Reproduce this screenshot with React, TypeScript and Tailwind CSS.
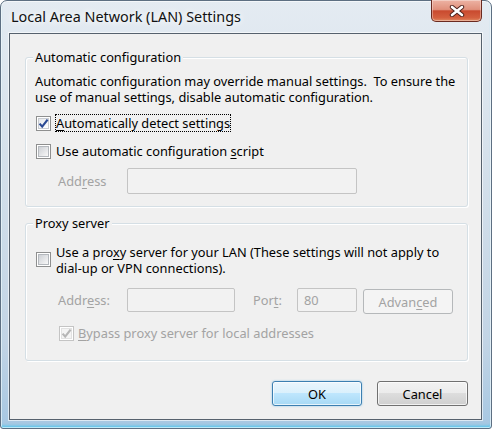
import React from "react";

function CheckBox({ checked, disabled }: { checked?: boolean; disabled?: boolean }) {
  return (
    <div
      className={`relative w-[15px] h-[15px] shrink-0 border ${
        disabled ? "border-[#c4c4c4]" : "border-[#8e8f8f]"
      } bg-white p-[1px]`}
    >
      <div
        className={`w-full h-full border ${
          disabled
            ? "border-[#e2e2e2] bg-[#f4f4f4]"
            : checked
            ? "border-[#c9ccd1] bg-gradient-to-br from-[#e4e7eb] to-[#ffffff]"
            : "border-[#b4b8bd] bg-gradient-to-br from-[#cdd0d5] to-[#f8f8f8]"
        }`}
      />
      {checked && (
        <svg
          className="absolute left-[0px] top-[0px]"
          width="13"
          height="13"
          viewBox="0 0 13 13"
        >
          <path
            d="M2.6 6.6 L5.2 9.6 L10.6 2.6"
            fill="none"
            stroke={disabled ? "#b6b6b6" : "#2b4a94"}
            strokeWidth="2.2"
          />
        </svg>
      )}
    </div>
  );
}

function GroupBox({
  title,
  className,
  children,
}: {
  title: string;
  className?: string;
  children: React.ReactNode;
}) {
  return (
    <div
      className={`ml-[15px] w-[443px] flex flex-col border border-[#d5dfe5] rounded-[3px] shadow-[inset_1px_1px_0_#ffffff,1px_1px_0_#ffffff] ${className ?? ""}`}
    >
      <span className="self-start -mt-[9px] ml-[7px] px-[2px] bg-[#f0f0f0] leading-[16px]">
        {title}
      </span>
      {children}
    </div>
  );
}

export default function App() {
  return (
    <div className="w-[492px] h-[429px] bg-white font-['Noto_Sans',sans-serif] text-[12.8px] text-black">
      <div className="w-[492px] h-[429px] rounded-t-[7px] rounded-b-[3px] border border-[#5d6f82] bg-[linear-gradient(180deg,#e4ebf2_0%,#d6e1eb_35%,#c2d4e5_80%,#a6c7e2_100%)] shadow-[inset_0_0_0_1px_rgba(255,255,255,0.6),inset_0_-3px_3px_-1px_rgba(70,200,240,0.9)] pl-[8px] pr-[9px] flex flex-col">
        {/* Title bar */}
        <div className="h-[32px] flex items-start justify-between">
          <div className="ml-[2px] mt-[6px] text-[14.4px] leading-[20px] text-[#111] [text-shadow:0_0_6px_#ffffff,0_0_10px_#ffffff]">
            Local Area Network (LAN) Settings
          </div>
          <div className="-mt-[1px] w-[51px] h-[22px] rounded-b-[5px] border border-t-0 border-[#6a2a20] bg-[linear-gradient(180deg,#edb3a4_0%,#e0907c_45%,#c94a2f_52%,#d4603f_85%,#e08a62_100%)] shadow-[inset_0_0_0_1px_rgba(255,255,255,0.35)] flex items-center justify-center">
            <svg width="16" height="12" viewBox="0 0 16 12">
              <path d="M3 2 L13 10 M13 2 L3 10" stroke="#4a1e18" strokeWidth="4.4" strokeLinecap="round" />
              <path d="M3 2 L13 10 M13 2 L3 10" stroke="#ffffff" strokeWidth="2.6" strokeLinecap="round" />
            </svg>
          </div>
        </div>

        {/* Client area */}
        <div className="w-[473px] h-[387px] border border-[#56616d] bg-[#f0f0f0] shadow-[0_0_0_1px_rgba(255,255,255,0.6)] flex flex-col">
          <GroupBox title="Automatic configuration" className="mt-[23px] pb-[12px]">
            <p className="mt-[8px] ml-[9px] leading-[16px]">
              Automatic configuration may override manual settings.&nbsp; To ensure the
              <br />
              use of manual settings, disable automatic configuration.
            </p>
            <div className="mt-[9px] ml-[10px] flex items-center gap-[4px]">
              <CheckBox checked />
              <span className="border border-dotted border-black leading-[16px]">
                <span className="underline underline-offset-2">A</span>utomatically detect settings
              </span>
            </div>
            <div className="mt-[10px] ml-[10px] flex items-center gap-[4px]">
              <CheckBox />
              <span className="border border-transparent leading-[16px]">
                Use automatic configuration <span className="underline underline-offset-2">s</span>cript
              </span>
            </div>
            <div className="mt-[8px] ml-[32px] flex items-center text-[#a3a3a3]">
              <span className="w-[69px] leading-[16px]">
                Add<span className="underline underline-offset-2">r</span>ess
              </span>
              <div className="w-[230px] h-[26px] border border-[#c4c4c4] rounded-[2px] bg-[#f2f2f2]" />
            </div>
          </GroupBox>

          <GroupBox title="Proxy server" className="mt-[16px] pb-[19px]">
            <div className="mt-[13px] ml-[10px] flex items-start gap-[5px]">
              <div className="mt-[8px]">
                <CheckBox />
              </div>
              <span className="leading-[16px]">
                Use a pro<span className="underline underline-offset-2">x</span>y server for your LAN (These settings will not apply to
                <br />
                dial-up or VPN connections).
              </span>
            </div>
            <div className="mt-[12px] ml-[32px] flex items-start text-[#a3a3a3]">
              <span className="w-[69px] leading-[24px]">
                Addr<span className="underline underline-offset-2">e</span>ss:
              </span>
              <div className="w-[108px] h-[24px] border border-[#c4c4c4] rounded-[2px] bg-[#f2f2f2]" />
              <span className="ml-[18px] w-[44px] leading-[24px]">
                Por<span className="underline underline-offset-2">t</span>:
              </span>
              <div className="w-[60px] h-[24px] border border-[#c4c4c4] rounded-[2px] bg-[#f2f2f2] pl-[6px] leading-[22px]">
                80
              </div>
              <div className="ml-[6px] mt-[1px] w-[90px] h-[25px] border border-[#b5b8ba] rounded-[3px] bg-[#f4f4f4] flex items-center justify-center leading-[16px]">
                Advan<span className="underline underline-offset-2">c</span>ed
              </div>
            </div>
            <div className="mt-[11px] ml-[33px] flex items-center gap-[4px] text-[#a3a3a3]">
              <CheckBox checked disabled />
              <span className="leading-[16px]">
                <span className="underline underline-offset-2">B</span>ypass proxy server for local addresses
              </span>
            </div>
          </GroupBox>

          <div className="mt-[20px] pr-[13px] flex justify-end gap-[15px]">
            <div className="w-[90px] h-[25px] rounded-[3px] border border-[#3c7fb1] bg-[linear-gradient(180deg,#eaf6fd_0%,#d9f0fc_50%,#bee6fd_50%,#a7d9f5_100%)] shadow-[inset_0_0_0_1px_rgba(255,255,255,0.7),0_0_2px_rgba(60,160,220,0.6)] flex items-center justify-center leading-[16px]">
              OK
            </div>
            <div className="w-[91px] h-[25px] rounded-[3px] border border-[#707070] bg-[linear-gradient(180deg,#f2f2f2_0%,#ebebeb_50%,#dddddd_50%,#cfcfcf_100%)] shadow-[inset_0_0_0_1px_rgba(255,255,255,0.7)] flex items-center justify-center leading-[16px]">
              Cancel
            </div>
          </div>
        </div>
      </div>
    </div>
  );
}
